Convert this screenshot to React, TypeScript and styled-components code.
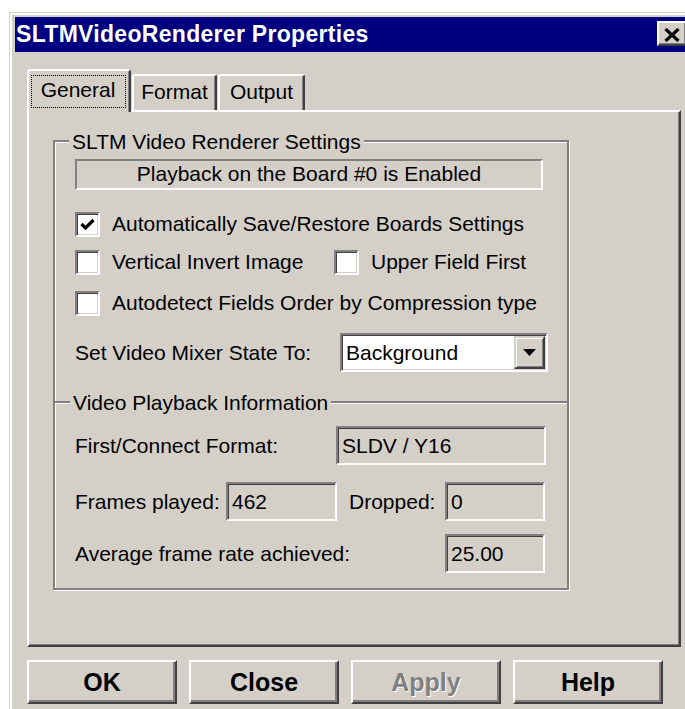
import React from "react";
import styled, { createGlobalStyle } from "styled-components";

const C = {
  face: "#d4d0c8",
  light: "#ffffff",
  shadow: "#808080",
  dark: "#404040",
  title: "#000080",
};

const Global = createGlobalStyle`
  html, body { margin: 0; padding: 0; background: #fff; overflow: hidden; }
  body { width: 685px; height: 709px; }
  #root { width: 685px; height: 709px; overflow: hidden; }
`;

const Window = styled.div`
  box-sizing: border-box;
  margin: 12px 0 0 9px;
  width: 690px;
  height: 720px;
  padding: 5px 0 0 6px;
  background: ${C.face};
  box-shadow: inset 1px 1px 0 ${C.face}, inset 3px 3px 0 ${C.light};
  font-family: "Liberation Sans", Arial, sans-serif;
  font-size: 21px;
  color: #000;
`;

const TitleBar = styled.div`
  display: flex;
  align-items: flex-start;
  width: 676px;
  height: 35px;
  background: ${C.title};
`;

const TitleText = styled.div`
  flex: 1;
  padding-left: 1px;
  color: #fff;
  font-weight: bold;
  font-size: 23px;
  letter-spacing: 0.3px;
  line-height: 35px;
  white-space: nowrap;
`;

const CloseButton = styled.div`
  box-sizing: border-box;
  display: flex;
  align-items: center;
  justify-content: center;
  width: 30px;
  height: 25px;
  margin: 4px 4px 0 0;
  padding-top: 2px;
  background: ${C.face};
  border: 2px solid;
  border-color: ${C.light} ${C.dark} ${C.dark} ${C.light};
  box-shadow: inset -1px -1px 0 ${C.shadow};
`;

const Body = styled.div`
  padding: 17px 0 0 12px;
`;

const TabStrip = styled.div`
  position: relative;
  z-index: 1;
  display: flex;
  align-items: flex-end;
  height: 43px;
  margin-bottom: -2px;
`;

const Tab = styled.div<{ $active?: boolean; $width: number; $gap?: number }>`
  box-sizing: border-box;
  display: flex;
  justify-content: center;
  width: ${(p) => p.$width}px;
  height: ${(p) => (p.$active ? 43 : 36)}px;
  margin: 0 0 ${(p) => (p.$active ? 0 : 2)}px ${(p) => p.$gap ?? 0}px;
  padding-top: 4px;
  background: ${C.face};
  border-top: 2px solid ${C.light};
  border-left: 2px solid ${C.light};
  border-right: 2px solid ${C.dark};
  border-radius: 3px 3px 0 0;
  box-shadow: inset -1px 0 0 ${C.shadow};
  line-height: 24px;
  white-space: nowrap;
`;

const FocusRing = styled.span`
  box-sizing: border-box;
  display: flex;
  justify-content: center;
  width: 95px;
  height: 33px;
  margin-right: 2px;
  border: 1px dotted #000;
  line-height: 27px;
`;

const Panel = styled.div`
  box-sizing: border-box;
  width: 654px;
  height: 537px;
  padding: 28px 0 0 24px;
  border: 2px solid;
  border-color: ${C.light} ${C.dark} ${C.dark} ${C.light};
  box-shadow: inset -1px -1px 0 ${C.shadow};
`;

const Frame = styled.div<{ $height?: number; $open?: boolean }>`
  box-sizing: border-box;
  width: 516px;
  ${(p) => (p.$height ? `height: ${p.$height}px;` : "")}
  padding: 0 0 ${(p) => (p.$open ? 0 : 15)}px 20px;
  border: 2px solid ${C.shadow};
  ${(p) => (p.$open ? "border-bottom: none;" : "")}
  box-shadow: inset 1px 1px 0 ${C.light}, 1px 1px 0 ${C.light};
`;

const Caption = styled.div<{ $shift: number }>`
  width: fit-content;
  margin: -12px 0 0 ${(p) => p.$shift}px;
  padding: 0 3px;
  line-height: 24px;
  background: ${C.face};
  white-space: nowrap;
`;

const StatusBox = styled.div`
  box-sizing: border-box;
  width: 468px;
  height: 31px;
  margin-top: 5px;
  border: 2px solid;
  border-color: ${C.shadow} ${C.light} ${C.light} ${C.shadow};
  text-align: center;
  line-height: 26px;
`;

const Row = styled.div<{ $top: number; $height?: number }>`
  display: flex;
  align-items: center;
  height: ${(p) => p.$height ?? 26}px;
  margin-top: ${(p) => p.$top}px;
  white-space: nowrap;
`;

const CheckItem = styled.label<{ $width?: number }>`
  display: flex;
  align-items: center;
  gap: 12px;
  flex: none;
  ${(p) => (p.$width ? `width: ${p.$width}px;` : "")}
`;

const CheckBox = styled.span`
  box-sizing: border-box;
  display: flex;
  align-items: center;
  justify-content: center;
  width: 25px;
  height: 25px;
  background: #fff;
  border: 2px solid;
  border-color: ${C.shadow} ${C.light} ${C.light} ${C.shadow};
  box-shadow: inset 1px 1px 0 ${C.dark}, inset -1px -1px 0 ${C.face};
`;

const Label = styled.span<{ $width: number; $indent?: number }>`
  box-sizing: border-box;
  flex: none;
  width: ${(p) => p.$width}px;
  padding-left: ${(p) => p.$indent ?? 0}px;
`;

const Field = styled.div<{ $width: number; $white?: boolean }>`
  box-sizing: border-box;
  flex: none;
  display: flex;
  align-items: center;
  width: ${(p) => p.$width}px;
  height: 39px;
  padding-left: 4px;
  background: ${(p) => (p.$white ? "#fff" : C.face)};
  border: 2px solid;
  border-color: ${C.shadow} ${C.light} ${C.light} ${C.shadow};
  box-shadow: inset 1px 1px 0 ${C.dark}, inset -1px -1px 0 ${C.face};
`;

const FieldText = styled.span`
  flex: 1;
`;

const DropButton = styled.span`
  box-sizing: border-box;
  display: flex;
  align-items: center;
  justify-content: center;
  width: 31px;
  height: 33px;
  margin-right: 1px;
  background: ${C.face};
  border: 2px solid;
  border-color: ${C.face} ${C.dark} ${C.dark} ${C.face};
  box-shadow: inset 1px 1px 0 ${C.light}, inset -1px -1px 0 ${C.shadow};
`;

const ButtonRow = styled.div`
  display: flex;
  gap: 12px;
  margin-top: 13px;
`;

const Button = styled.div<{ $disabled?: boolean }>`
  box-sizing: border-box;
  display: flex;
  align-items: center;
  justify-content: center;
  width: 150px;
  height: 44px;
  background: ${C.face};
  border: 2px solid;
  border-color: ${C.light} ${C.dark} ${C.dark} ${C.light};
  box-shadow: inset -2px -2px 0 ${C.shadow};
  font-weight: bold;
  font-size: 25px;
  color: ${(p) => (p.$disabled ? C.shadow : "#000")};
  text-shadow: ${(p) => (p.$disabled ? `1px 1px 0 ${C.light}` : "none")};
`;

const CheckMark = () => (
  <svg width="15" height="13" viewBox="0 0 15 13">
    <polyline points="1.5,6 5.5,10 13.5,2" fill="none" stroke="#000" strokeWidth="3.2" />
  </svg>
);

const Check = ({ checked, children, width }: { checked?: boolean; children: React.ReactNode; width?: number }) => (
  <CheckItem $width={width}>
    <CheckBox>{checked && <CheckMark />}</CheckBox>
    {children}
  </CheckItem>
);

export default function App() {
  return (
    <>
      <Global />
      <Window>
        <TitleBar>
          <TitleText>SLTMVideoRenderer Properties</TitleText>
          <CloseButton>
            <svg width="16" height="14" viewBox="0 0 16 14">
              <path d="M1.5 1 L14.5 13 M14.5 1 L1.5 13" stroke="#000" strokeWidth="3.2" />
            </svg>
          </CloseButton>
        </TitleBar>
        <Body>
          <TabStrip>
            <Tab $active $width={104}>
              <FocusRing>General</FocusRing>
            </Tab>
            <Tab $width={85} $gap={1}>Format</Tab>
            <Tab $width={87} $gap={1}>Output</Tab>
          </TabStrip>
          <Panel>
            <Frame $height={261} $open>
              <Caption $shift={-6}>SLTM Video Renderer Settings</Caption>
              <StatusBox>Playback on the Board #0 is Enabled</StatusBox>
              <Row $top={21}>
                <Check checked>Automatically Save/Restore Boards Settings</Check>
              </Row>
              <Row $top={12}>
                <Check width={259}>Vertical Invert Image</Check>
                <Check>Upper Field First</Check>
              </Row>
              <Row $top={15}>
                <Check>Autodetect Fields Order by Compression type</Check>
              </Row>
              <Row $top={17} $height={39}>
                <Label $width={265}>Set Video Mixer State To:</Label>
                <Field $width={208} $white>
                  <FieldText>Background</FieldText>
                  <DropButton>
                    <svg width="13" height="7" viewBox="0 0 13 7">
                      <polygon points="0,0 13,0 6.5,7" fill="#000" />
                    </svg>
                  </DropButton>
                </Field>
              </Row>
            </Frame>
            <Frame>
              <Caption $shift={-5}>Video Playback Information</Caption>
              <Row $top={11} $height={39}>
                <Label $width={261}>First/Connect Format:</Label>
                <Field $width={210}>SLDV / Y16</Field>
              </Row>
              <Row $top={17} $height={39}>
                <Label $width={151}>Frames played:</Label>
                <Field $width={111}>462</Field>
                <Label $width={108} $indent={12}>Dropped:</Label>
                <Field $width={100}>0</Field>
              </Row>
              <Row $top={13} $height={39}>
                <Label $width={370}>Average frame rate achieved:</Label>
                <Field $width={100}>25.00</Field>
              </Row>
            </Frame>
          </Panel>
          <ButtonRow>
            <Button>OK</Button>
            <Button>Close</Button>
            <Button $disabled>Apply</Button>
            <Button>Help</Button>
          </ButtonRow>
        </Body>
      </Window>
    </>
  );
}
